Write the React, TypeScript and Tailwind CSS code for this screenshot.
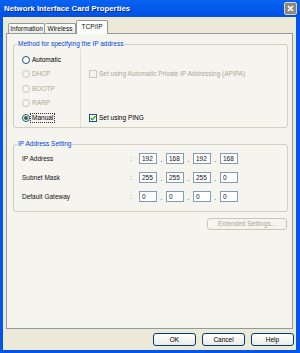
import React from "react";

function Radio({ label, checked, disabled, focus }: { label: string; checked?: boolean; disabled?: boolean; focus?: boolean }) {
  return (
    <div className="flex items-center h-[14.5px]">
      <span
        className={`w-[8px] h-[8px] rounded-full border flex items-center justify-center ${
          disabled ? "border-[#cac8bb] bg-[#f5f4ef]" : "border-[#1c5180] bg-white"
        }`}
      >
        {checked && <span className="w-[4px] h-[4px] rounded-full bg-[#2f6b2f]" />}
      </span>
      <span
        className={`ml-[1px] leading-[8px] px-[1px] ${disabled ? "text-[#aca899]" : "text-black"} ${
          focus ? "outline outline-1 outline-dotted outline-[#333]" : ""
        }`}
      >
        {label}
      </span>
    </div>
  );
}

function Check({ label, checked, disabled }: { label: string; checked?: boolean; disabled?: boolean }) {
  return (
    <div className="flex items-center h-[14.5px]">
      <span
        className={`w-[8px] h-[8px] border flex items-center justify-center ${
          disabled ? "border-[#cac8bb] bg-[#f5f4ef]" : "border-[#1c5180] bg-white"
        }`}
      >
        {checked && (
          <svg width="6" height="6" viewBox="0 0 6 6">
            <path d="M0.5 3 L2.3 4.8 L5.5 1" stroke="#21a121" strokeWidth="1.3" fill="none" />
          </svg>
        )}
      </span>
      <span className={`ml-[2px] leading-[8px] ${disabled ? "text-[#aca899]" : "text-black"}`}>{label}</span>
    </div>
  );
}

function IpRow({ label, values }: { label: string; values: string[] }) {
  return (
    <div className="flex items-center h-[11px]">
      <span className="w-[108px]">{label}</span>
      <span className="w-[9px] text-[#777]">:</span>
      {values.map((v, i) => (
        <React.Fragment key={i}>
          {i > 0 && <span className="w-[9px] self-end text-center leading-[8px]">.</span>}
          <span className="w-[18px] h-[11px] border border-[#7f9db9] bg-white pl-[2px] leading-[9px] flex items-center">
            {v}
          </span>
        </React.Fragment>
      ))}
    </div>
  );
}

function Btn({ label }: { label: string }) {
  return (
    <div className="w-[43px] h-[13px] rounded-[3px] border border-[#003c74] bg-gradient-to-b from-[#ffffff] to-[#ecebe6] flex items-center justify-center text-black">
      {label}
    </div>
  );
}

export default function App() {
  return (
    <div className="w-[300px] h-[353px] bg-[#0055ea] flex flex-col font-['Liberation_Sans',Arial,sans-serif] text-[6.5px] text-[#111]">
      {/* title bar */}
      <div className="h-[17px] flex items-center bg-gradient-to-b from-[#0a62f0] to-[#0050e4]">
        <span className="pl-[4px] text-white font-bold text-[7.8px] [text-shadow:1px_1px_0_#0a2a80]">
          Network Interface Card Properties
        </span>
        <div className="ml-auto mr-[3px] w-[13px] h-[13px] rounded-[2px] border border-[#d8d8d0] bg-[#8a877c] flex items-center justify-center">
          <svg width="7" height="7" viewBox="0 0 7 7">
            <path d="M1 1 L6 6 M6 1 L1 6" stroke="white" strokeWidth="1.6" />
          </svg>
        </div>
      </div>
      {/* body */}
      <div className="flex-1 ml-[3px] mr-[4px] mb-[3px] bg-[#ece9d8] flex flex-col px-[3px]">
        {/* tabs */}
        <div className="h-[16px] flex items-end pl-[2px]">
          <div className="w-[37px] h-[10px] border border-b-0 border-[#919b9c] rounded-t-[2px] bg-gradient-to-b from-[#ffffff] to-[#ecebe6] flex items-center justify-center">
            Information
          </div>
          <div className="w-[31px] h-[10px] border border-b-0 border-l-0 border-[#919b9c] rounded-t-[2px] bg-gradient-to-b from-[#ffffff] to-[#ecebe6] flex items-center justify-center">
            Wireless
          </div>
          <div className="w-[32px] h-[14px] -mb-[1px] relative z-10 border border-b-0 border-[#919b9c] rounded-t-[2px] bg-[#fcfcfb] flex items-center justify-center pb-[1px]">
            TCP/IP
          </div>
        </div>
        {/* panel */}
        <div className="h-[296px] border border-[#919b9c] bg-[#f5f4ef] pl-[6px] pr-[4px] pt-[6px] flex flex-col">
          <fieldset className="border border-[#d0d0bf] rounded-[3px] px-[3px] pt-[1px] pb-0">
            <legend className="leading-[8px] px-[1px] text-[#0046d5]">Method for specifying the IP address</legend>
            <div className="flex">
              <div className="w-[64px] border-r border-[#e0dfd3] pl-[5px] pt-[3.5px] pb-[2px]">
                <Radio label="Automatic" />
                <Radio label="DHCP" disabled />
                <Radio label="BOOTP" disabled />
                <Radio label="RARP" disabled />
                <Radio label="Manual" checked focus />
              </div>
              <div className="pl-[8px] pt-[3.5px]">
                <div className="h-[14.5px]" />
                <Check label="Set using Automatic Private IP Addressing (APIPA)" disabled />
                <div className="h-[14.5px]" />
                <div className="h-[14.5px]" />
                <Check label="Set using PING" checked />
              </div>
            </div>
          </fieldset>
          <fieldset className="mt-[12px] border border-[#d0d0bf] rounded-[3px] px-[3px] pt-[5px] pb-[9px]">
            <legend className="leading-[8px] px-[1px] text-[#0046d5]">IP Address Setting</legend>
            <div className="pl-[5px] flex flex-col gap-[8px]">
              <IpRow label="IP Address" values={["192", "168", "192", "168"]} />
              <IpRow label="Subnet Mask" values={["255", "255", "255", "0"]} />
              <IpRow label="Default Gateway" values={["0", "0", "0", "0"]} />
            </div>
          </fieldset>
          <div className="mt-[6px] self-end mr-[1px] w-[80px] h-[12px] rounded-[3px] border border-[#c9c7ba] bg-[#f5f4ef] flex items-center justify-center text-[#aca899]">
            Extended Settings...
          </div>
        </div>
        {/* buttons */}
        <div className="mt-[4px] flex justify-end gap-[6px] -mr-[1px]">
          <Btn label="OK" />
          <Btn label="Cancel" />
          <Btn label="Help" />
        </div>
      </div>
    </div>
  );
}
